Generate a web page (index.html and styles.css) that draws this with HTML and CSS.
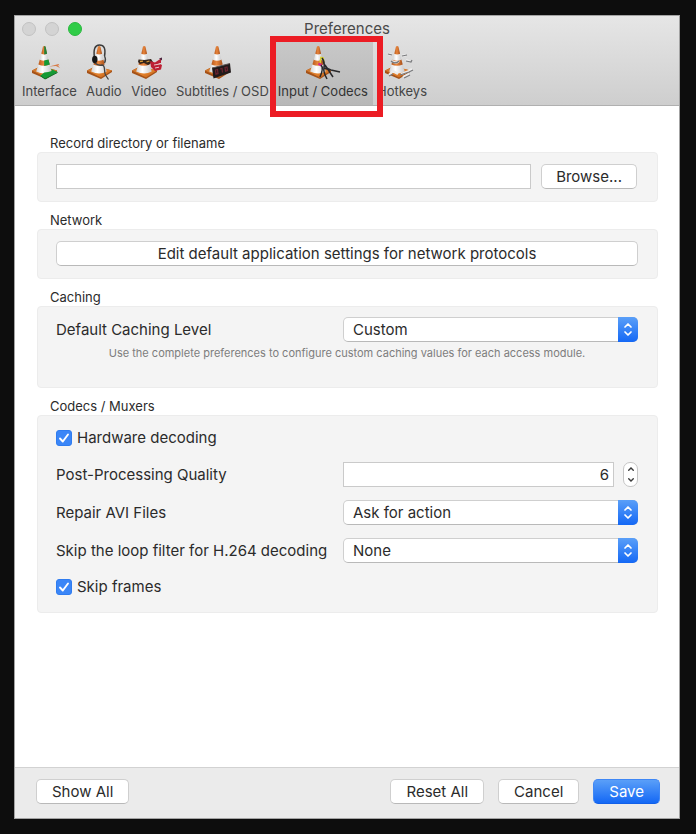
FILE: index.html
```html
<!DOCTYPE html>
<html lang="en">
<head>
<meta charset="utf-8">
<meta name="viewport" content="width=device-width, initial-scale=1">
<title>Preferences</title>
<link rel="stylesheet" href="styles.css">
</head>
<body>
<svg class="defs" aria-hidden="true">
  <defs>
    <linearGradient id="orange" x1="0" x2="1"><stop offset="0" stop-color="#b85a1c"/><stop offset=".45" stop-color="#e8853c"/><stop offset="1" stop-color="#a8501a"/></linearGradient>
    <linearGradient id="white" x1="0" x2="1"><stop offset="0" stop-color="#d4d4d4"/><stop offset=".4" stop-color="#ffffff"/><stop offset="1" stop-color="#c9c9cb"/></linearGradient>
    <linearGradient id="base" x1="0" y1="0" x2="1" y2="1"><stop offset="0" stop-color="#c8752f"/><stop offset=".6" stop-color="#e27f2a"/><stop offset="1" stop-color="#b45a17"/></linearGradient>
    <symbol id="cone" viewBox="0 0 36 36">
      <path d="M1 26.500 10 22l16 4.500v1.500L15 35 1 29z" fill="#a55218"/>
      <path d="M1 26.500 10 22l16 4.500L15 33.500z" fill="url(#base)"/>
      <path d="M7.500 20h11l2.200 7.500q-7.500 4-15.500 0z" fill="url(#white)"/>
      <path d="M8.800 15.500h8.600l1.300 5q-5.700 2.600-11.300 0z" fill="url(#orange)"/>
      <path d="M10.500 9.500h5.200l1.700 6.200q-4.300 2.200-8.600 0z" fill="url(#white)"/>
      <path d="M12 2.500q1.200-1 2.400 0l1.700 7.300q-3 1.500-5.800 0z" fill="url(#orange)"/>
    </symbol>
    <symbol id="updown" viewBox="0 0 20 24">
      <path d="M7 9.500 10 6.500l3 3M7 14.500l3 3 3-3" fill="none" stroke="#fff" stroke-width="1.700" stroke-linecap="round" stroke-linejoin="round"/>
    </symbol>
    <symbol id="tick" viewBox="0 0 16 16">
      <path d="M4 8.500 6.800 11.500 12 4.500" fill="none" stroke="#fff" stroke-width="1.900" stroke-linecap="round" stroke-linejoin="round"/>
    </symbol>
  </defs>
</svg>

<div class="window">
  <header class="titlebar">
    <div class="title-row">
      <div class="lights">
        <button class="light" aria-label="Close"></button>
        <button class="light" aria-label="Minimize"></button>
        <button class="light zoomable" aria-label="Zoom"></button>
      </div>
      <h1>Preferences</h1>
    </div>
    <nav class="toolbar">
      <button class="tool">
        <svg viewBox="0 0 36 36" aria-hidden="true"><use href="#cone"/>
          <path d="M13.200 2q1.200 0 1.500 1l1.400 6.800-2.900.8z" fill="#23823a"/>
          <path d="M13.200 16.500 17.400 15.500l1.400 5-5.600 1.500z" fill="#159a35"/>
          <path d="M18 22.500l6-1.500 3.500-1 1 1.500-2-.5 2.500 3-4-2z" fill="#d77a45"/>
          <path d="M13.200 28.500q4.300-.3 7.500-1.500l-.5-2 6.500 3L14 35l-5-3z" fill="#159a35"/>
          <path d="M10 32l4 3 12.500-6.500" fill="none" stroke="#0d6f27"/>
        </svg><span>Interface</span>
      </button>
      <button class="tool">
        <svg viewBox="0 0 36 36" aria-hidden="true"><use href="#cone"/>
          <path d="M8.500 14Q6.500 1 13.500 1T18.500 12" fill="none" stroke="#3b3b3b" stroke-width="1.500"/>
          <ellipse cx="8.800" cy="15.500" rx="2.700" ry="3.700" fill="#171717"/>
          <path d="M18.500 12q2 3.500 0 7M9 19q3 3 7 2c4 0 1.500 7 3.500 10l3 4.500" fill="none" stroke="#444" stroke-width="1.300"/>
        </svg><span>Audio</span>
      </button>
      <button class="tool">
        <svg viewBox="0 0 36 36" aria-hidden="true"><use href="#cone"/>
          <path d="M7.500 15.500l6 .5 6.500-1 2 3-5 3-4-2-4 1-2-2z" fill="#33241a"/>
          <path d="M9 17.500l3-.3M15.500 18l3-1" stroke="#d69a38" stroke-width="1.300"/>
          <path d="M19 17l5 1.500 6-4v4.500h-3l4 2-1 4.500-6 1.500-4-4z" fill="#bd2034"/>
          <path d="M23 21l6-1M24 24l4-.8" stroke="#e9c4c8" stroke-width="1"/>
          <path d="M28 14.500l3-1v3" fill="#4b2740"/>
        </svg><span>Video</span>
      </button>
      <button class="tool">
        <svg viewBox="0 0 36 36" aria-hidden="true"><use href="#cone"/>
          <path d="M8 24l18-4.500 1 9L9.500 34.500z" fill="#211a1b"/>
          <path d="M8 24l18-4.500" stroke="#5b5252"/>
          <path d="M11.500 26l2-.5.500 4-2 .6zM16 25l2-.5.500 4M21 23.500l2-.5.500 3.500-2 .6z" fill="none" stroke="#6f2430" stroke-width="1.200"/>
        </svg><span>Subtitles / OSD</span>
      </button>
      <button class="tool selected" aria-current="page">
        <svg viewBox="0 0 36 36" aria-hidden="true"><use href="#cone"/>
          <path d="M15 19l1-5.500 2 .5 1 5" fill="none" stroke="#d8cf2d" stroke-width="1.600"/>
          <path d="M13.500 19.500l3 2" stroke="#d5298a" stroke-width="2.600"/>
          <path d="M17 14q3 4 2 9t3 12M18 16q1 8 8 10l9 2M16 21q3 3-1 12M20 21l8 12M19 24l6 2" fill="none" stroke="#28282a" stroke-width="1.500"/>
        </svg><span>Input / Codecs</span>
      </button>
      <button class="tool">
        <svg viewBox="0 0 36 36" aria-hidden="true"><use href="#cone"/>
          <path d="M4 10l4 1M18 12l4-1M22 16l4 1.500M8 17q4 3 7 0M5 31l4-4 5 3M17 30l8-3 3-2M19 33l6-3" fill="none" stroke="#ececec" stroke-width="2.400"/>
          <path d="M4 10l4 1M18 12l5-1M22 17l5 1 1-2M7 17q4 4 8 0M5 32l4-2M16 31l9-3 4-2M20 34l6-3" fill="none" stroke="#78797c" stroke-width="1.200"/>
        </svg><span>Hotkeys</span>
      </button>
    </nav>
  </header>

  <main class="content">
    <section class="group">
      <h2><label for="record">Record directory or filename</label></h2>
      <div class="panel record">
        <input class="field" id="record" type="text">
        <button class="btn browse">Browse...</button>
      </div>
    </section>

    <section class="group">
      <h2>Network</h2>
      <div class="panel">
        <button class="btn wide">Edit default application settings for network protocols</button>
      </div>
    </section>

    <section class="group">
      <h2>Caching</h2>
      <div class="panel caching">
        <div class="row">
          <label for="cache">Default Caching Level</label>
          <div class="popup">
            <select id="cache"><option>Custom</option></select>
            <svg aria-hidden="true"><use href="#updown"/></svg>
          </div>
        </div>
        <p class="hint">Use the complete preferences to configure custom caching values for each access module.</p>
      </div>
    </section>

    <section class="group">
      <h2>Codecs / Muxers</h2>
      <div class="panel codecs">
        <label class="check">
          <span class="box"><input type="checkbox" checked><svg aria-hidden="true"><use href="#tick"/></svg></span>
          Hardware decoding
        </label>
        <div class="row">
          <label for="quality">Post-Processing Quality</label>
          <div class="number">
            <input class="field" id="quality" type="number" value="6">
            <div class="stepper">
              <button aria-label="Increase"><svg viewBox="0 0 12 12" aria-hidden="true"><path d="M3.500 8 6 5.500 8.500 8"/></svg></button>
              <button aria-label="Decrease"><svg viewBox="0 0 12 12" aria-hidden="true"><path d="M3.500 4 6 6.500 8.500 4"/></svg></button>
            </div>
          </div>
        </div>
        <div class="row">
          <label for="avi">Repair AVI Files</label>
          <div class="popup">
            <select id="avi"><option>Ask for action</option></select>
            <svg aria-hidden="true"><use href="#updown"/></svg>
          </div>
        </div>
        <div class="row">
          <label for="loop">Skip the loop filter for H.264 decoding</label>
          <div class="popup">
            <select id="loop"><option>None</option></select>
            <svg aria-hidden="true"><use href="#updown"/></svg>
          </div>
        </div>
        <label class="check">
          <span class="box"><input type="checkbox" checked><svg aria-hidden="true"><use href="#tick"/></svg></span>
          Skip frames
        </label>
      </div>
    </section>
  </main>

  <footer class="actions">
    <button class="btn show">Show All</button>
    <button class="btn">Reset All</button>
    <button class="btn">Cancel</button>
    <button class="btn primary">Save</button>
  </footer>
</div>
</body>
</html>
```
FILE: styles.css
```css
* {
  box-sizing: border-box;
}

body {
  margin: 0;
  min-height: 100vh;
  padding: 15px 16px 15px 14px;
  display: flex;
  background: #0d0d0d;
  color: #2b2b2b;
  font: 15px/20px Inter, "Liberation Sans", sans-serif;
}

button,
input,
select {
  margin: 0;
  font: inherit;
  color: inherit;
}

h1,
h2,
p {
  margin: 0;
  font-weight: 400;
}

.defs {
  position: absolute;
  width: 0;
  height: 0;
}

.window {
  flex: 1;
  min-width: 0;
  display: flex;
  flex-direction: column;
  border: 1px solid #a3a3a3;
  background: #fff;
}

/* Title bar and toolbar */
.titlebar {
  border-bottom: 1px solid #b0b0b0;
  background: linear-gradient(#e6e6e6, #cecece);
}

.title-row {
  display: grid;
  grid-template-columns: 1fr auto 1fr;
  height: 25px;
  align-items: center;
  padding: 0 7px;
}

.lights {
  display: flex;
  gap: 9px;
}

.light {
  width: 14px;
  height: 14px;
  padding: 0;
  border: 1px solid #c2c2c2;
  border-radius: 50%;
  background: #d4d4d4;
}

.zoomable {
  border-color: #2bb840;
  background: #30cc48;
}

h1 {
  font-size: 15px;
  color: #4a4a4a;
}

.toolbar {
  display: flex;
  padding-left: 3px;
}

.tool {
  position: relative;
  display: flex;
  flex-direction: column;
  align-items: center;
  height: 64px;
  padding: 3px 5px 0 4px;
  border: 0;
  background: none;
  color: #454545;
  font-size: 13px;
  line-height: 18px;
  white-space: nowrap;
}

.tool svg {
  width: 36px;
  height: 36px;
  margin-bottom: 2px;
}

.selected {
  z-index: 1;
  background: linear-gradient(#c8c8c8, #b8b8b8);
  color: #333;
}

.selected::after {
  content: "";
  position: absolute;
  inset: -5px -10px -12px -4px;
  border: 6px solid #ec1c24;
}

/* Settings groups */
.content {
  flex: 1;
  display: flex;
  flex-direction: column;
  gap: 9px;
  padding: 28px 21px 20px 22px;
}

h2 {
  padding-left: 13px;
  font-size: 13px;
  line-height: 18px;
}

.panel {
  padding: 11px 19px 12px 18px;
  border: 1px solid #ececec;
  border-radius: 4px;
  background: #f4f4f4;
}

.record {
  display: flex;
  align-items: center;
  gap: 10px;
  padding-right: 20px;
}

.field {
  flex: 1;
  min-width: 0;
  height: 25px;
  padding: 0 4px;
  border: 1px solid #cacaca;
  background: #fff;
}

.btn {
  height: 25px;
  padding: 0 15px;
  border: 1px solid #cfcfcf;
  border-bottom-color: #b9b9b9;
  border-radius: 5px;
  background: #fff;
  line-height: 20px;
}

.browse {
  padding: 0 14px;
}

.wide {
  display: block;
  width: 100%;
}

.row {
  display: flex;
  align-items: center;
}

.row > label {
  width: 287px;
  white-space: nowrap;
}

.popup {
  position: relative;
  flex: 1;
}

.popup select {
  display: block;
  width: 100%;
  height: 25px;
  padding: 0 28px 0 9px;
  appearance: none;
  border: 1px solid #cfcfcf;
  border-bottom-color: #b9b9b9;
  border-radius: 5px;
  background: #fff;
}

.popup svg {
  position: absolute;
  top: 0;
  right: 0;
  width: 20px;
  height: 25px;
  border-radius: 0 5px 5px 0;
  background: linear-gradient(#5a9ff8, #1468f5);
  pointer-events: none;
}

.caching {
  padding-top: 10px;
}

.hint {
  padding: 4px 0 15px;
  color: #7d7d7d;
  font-size: 11px;
  line-height: 14px;
  text-align: center;
}

.codecs {
  display: flex;
  flex-direction: column;
  gap: 13px;
  padding-bottom: 14px;
}

.check {
  display: flex;
  align-items: center;
  gap: 5px;
  height: 22px;
}

.box {
  display: grid;
}

.box input,
.box svg {
  grid-area: 1 / 1;
  width: 16px;
  height: 16px;
}

.box input {
  appearance: none;
  border: 1px solid #b9b9b9;
  border-radius: 3px;
  background: #fff;
}

.box input:checked {
  border-color: #2f7cf0;
  background: #3b86f7;
}

.box svg {
  pointer-events: none;
}

.number {
  flex: 1;
  display: flex;
  gap: 9px;
}

.number .field {
  appearance: textfield;
  text-align: right;
}

.number .field::-webkit-inner-spin-button {
  appearance: none;
  margin: 0;
}

.stepper {
  display: flex;
  flex-direction: column;
  width: 15px;
  height: 25px;
  border: 1px solid #c6c6c6;
  border-radius: 7px;
  background: #fff;
}

.stepper button {
  flex: 1;
  display: grid;
  place-items: center;
  min-height: 0;
  padding: 0;
  border: 0;
  background: none;
}

.stepper svg {
  width: 12px;
  height: 11px;
  fill: none;
  stroke: #3a3a3a;
  stroke-width: 1.5;
  stroke-linecap: round;
}

/* Footer */
.actions {
  display: flex;
  align-items: flex-start;
  gap: 14px;
  height: 51px;
  padding: 11px 19px 0 21px;
  border-top: 1px solid #d2d2d2;
  background: #ebebeb;
}

.show {
  margin-right: auto;
}

.primary {
  border-color: #3f87f5;
  border-bottom-color: #1260e8;
  background: linear-gradient(#5a9ff8, #1468f5);
  color: #fff;
}
```
